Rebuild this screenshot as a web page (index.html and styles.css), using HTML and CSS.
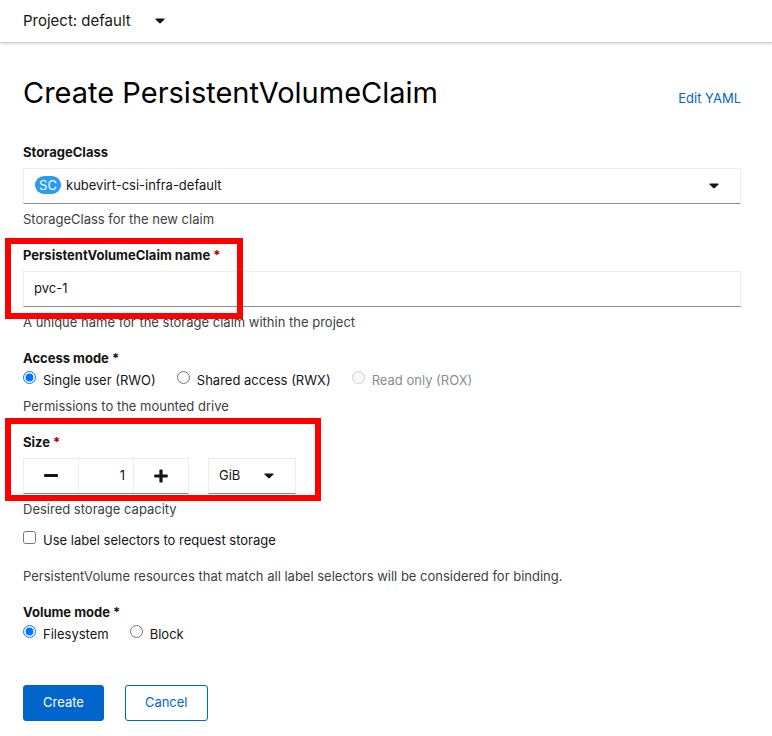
FILE: index.html
```html
<!DOCTYPE html>
<html lang="en">
<head>
  <meta charset="utf-8">
  <meta name="viewport" content="width=device-width, initial-scale=1">
  <title>Create PersistentVolumeClaim</title>
  <link rel="stylesheet" href="styles.css">
</head>
<body>
  <header class="project-bar">
    <button class="project-toggle" type="button" aria-haspopup="listbox">
      <span>Project: default</span>
      <svg class="caret" viewBox="0 0 10 6" aria-hidden="true"><path d="M1 .5h8q1 0 .4.9L5.800 5.100q-.8.8-1.600 0L.6 1.400Q0 .5 1 .5z"/></svg>
    </button>
  </header>

  <main class="page">
    <div class="page-head">
      <h1 class="title">Create PersistentVolumeClaim</h1>
      <a class="yaml-link" href="#yaml">Edit YAML</a>
    </div>

    <form class="form">
      <div class="group">
        <label class="label" for="storage-class">StorageClass</label>
        <div class="select-wrap">
          <span class="badge" aria-hidden="true">SC</span>
          <select class="control select-class" id="storage-class">
            <option>kubevirt-csi-infra-default</option>
          </select>
          <svg class="caret" viewBox="0 0 10 6" aria-hidden="true"><path d="M1 .5h8q1 0 .4.9L5.800 5.100q-.8.8-1.600 0L.6 1.400Q0 .5 1 .5z"/></svg>
        </div>
        <p class="help">StorageClass for the new claim</p>
      </div>

      <div class="group">
        <label class="label" for="pvc-name">PersistentVolumeClaim name <span class="required">*</span></label>
        <div class="field">
          <input class="control" id="pvc-name" type="text" value="pvc-1" required>
        </div>
        <p class="help">A unique name for the storage claim within the project</p>
        <div class="highlight highlight-name"></div>
      </div>

      <fieldset class="group">
        <legend class="label">Access mode *</legend>
        <div class="choices">
          <label class="choice"><input type="radio" name="access" checked>Single user (RWO)</label>
          <label class="choice"><input type="radio" name="access">Shared access (RWX)</label>
          <label class="choice choice-off"><input type="radio" name="access" disabled>Read only (ROX)</label>
        </div>
        <p class="help">Permissions to the mounted drive</p>
      </fieldset>

      <div class="group">
        <label class="label" for="size">Size <span class="required">*</span></label>
        <div class="size-row">
          <div class="stepper">
            <button class="step" type="button" aria-label="Decrease"><svg class="sign" viewBox="0 0 14 14" aria-hidden="true"><rect x="0" y="5" width="14" height="3" rx="1"/></svg></button>
            <input class="step-value" id="size" type="number" value="1" min="1">
            <button class="step" type="button" aria-label="Increase"><svg class="sign" viewBox="0 0 14 14" aria-hidden="true"><path d="M6 .5h2q.6 0 .6.6v4.300h4.400q.8 0 .8.8v1.600q0 .8-.8.8H8.600v4.300q0 .6-.6.6H6q-.6 0-.6-.6V8.600H1q-.8 0-.8-.8V6.200q0-.8.8-.8h4.400V1.100q0-.6.6-.6z"/></svg></button>
          </div>
          <div class="select-wrap">
            <select class="control select-unit" aria-label="Unit">
              <option>GiB</option>
            </select>
            <svg class="caret" viewBox="0 0 10 6" aria-hidden="true"><path d="M1 .5h8q1 0 .4.9L5.800 5.100q-.8.8-1.600 0L.6 1.400Q0 .5 1 .5z"/></svg>
          </div>
        </div>
        <p class="help">Desired storage capacity</p>
        <div class="highlight highlight-size"></div>
      </div>

      <div class="group group-selectors">
        <label class="choice"><input type="checkbox">Use label selectors to request storage</label>
        <p class="help">PersistentVolume resources that match all label selectors will be considered for binding.</p>
      </div>

      <fieldset class="group">
        <legend class="label">Volume mode *</legend>
        <div class="choices">
          <label class="choice"><input type="radio" name="mode" checked>Filesystem</label>
          <label class="choice"><input type="radio" name="mode">Block</label>
        </div>
      </fieldset>

      <div class="actions">
        <button class="btn btn-primary" type="submit">Create</button>
        <button class="btn btn-secondary" type="button">Cancel</button>
      </div>
    </form>
  </main>
</body>
</html>
```

FILE: styles.css
```css
* {
  box-sizing: border-box;
}

body {
  margin: 0;
  background: #fff;
  color: #151515;
  font: 13px/21px Inter, "Liberation Sans", sans-serif;
}

button,
input,
select {
  font: inherit;
  color: inherit;
}

.project-bar {
  padding: 9px 23px;
  border-bottom: 1px solid #d2d2d2;
  box-shadow: 0 1px 3px rgba(0, 0, 0, 0.14);
}

.project-toggle {
  display: flex;
  align-items: center;
  gap: 24px;
  padding: 0;
  border: 0;
  background: none;
  font-size: 15px;
  line-height: 24px;
}

.caret {
  width: 10px;
  height: 6px;
  fill: #151515;
}

.page {
  padding: 30px 31px 15px 23px;
}

.page-head {
  display: flex;
  align-items: center;
  justify-content: space-between;
  margin-bottom: 30px;
}

.title {
  margin: 0;
  color: #000;
  font-size: 29px;
  font-weight: 400;
  line-height: 39px;
}

.yaml-link {
  padding-top: 12px;
  color: #06c;
  text-decoration: none;
}

.group {
  position: relative;
  min-width: 0;
  margin: 0 0 15px;
  padding: 0;
  border: 0;
}

.label {
  display: block;
  padding: 0;
  font-weight: 700;
}

.required {
  color: #a30000;
}

.field,
.select-wrap,
.stepper {
  margin: 5px 0;
}

.control {
  display: block;
  width: 100%;
  height: 36px;
  padding: 0 10px 2px;
  border: 1px solid #ededed;
  border-bottom-color: #8a8d90;
  border-radius: 0;
  background: #fff;
  appearance: none;
}

.help {
  margin: 0;
  color: #3c3f42;
}

.select-wrap {
  position: relative;
}

.select-wrap .caret {
  position: absolute;
  top: 15px;
  right: 22px;
  pointer-events: none;
}

.badge {
  position: absolute;
  top: 8px;
  left: 12px;
  width: 26px;
  border-radius: 9px;
  background: #2b9af3;
  color: #fff;
  line-height: 18px;
  text-align: center;
}

.select-class {
  padding-left: 42px;
}

.choices {
  display: flex;
  flex-wrap: wrap;
  gap: 21px;
  padding-top: 1px;
}

.choices + .help {
  margin-top: 5px;
}

.choice {
  display: flex;
  align-items: flex-start;
  gap: 7px;
}

.choice input {
  width: 13px;
  height: 13px;
  margin: 1px 0 0;
}

.choice-off {
  color: #8a8d90;
}

.size-row {
  display: flex;
  gap: 19px;
}

.stepper {
  display: flex;
  height: 36px;
  border: 1px solid #ededed;
  border-bottom-color: #8a8d90;
}

.step {
  display: grid;
  place-items: center;
  width: 54px;
  padding: 0;
  border: 0;
  background: none;
}

.sign {
  width: 14px;
  height: 14px;
  fill: #151515;
}

.step-value {
  width: 56px;
  padding: 0 8px 2px;
  border: solid #ededed;
  border-width: 0 1px;
  text-align: right;
  appearance: textfield;
}

.step-value::-webkit-inner-spin-button {
  display: none;
}

.select-unit {
  width: 88px;
}

.group-selectors {
  display: grid;
  gap: 15px;
  margin-top: -5px;
}

.highlight {
  position: absolute;
  left: -18px;
  border: 6px solid #f00;
  pointer-events: none;
}

.highlight-name {
  top: -7px;
  width: 238px;
  height: 81px;
}

.highlight-size {
  top: -14px;
  width: 316px;
  height: 83px;
}

.actions {
  display: flex;
  gap: 21px;
  margin-top: 40px;
}

.btn {
  height: 36px;
  padding: 0 19px 2px;
  border: 1px solid #06c;
  border-radius: 3px;
}

.btn-primary {
  background: #06c;
  color: #fff;
}

.btn-secondary {
  background: #fff;
  color: #06c;
}
```
